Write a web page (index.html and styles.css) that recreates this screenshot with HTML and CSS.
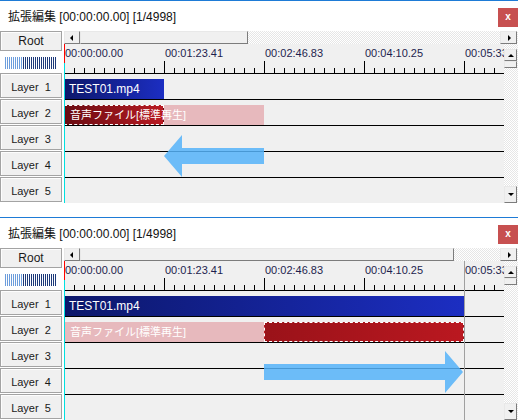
FILE: index.html
```html
<!DOCTYPE html>
<html lang="ja">
<head>
<meta charset="utf-8">
<title>拡張編集</title>
<link rel="stylesheet" href="styles.css">
</head>
<body>
<div class="screen">
  <div class="win">
    <div class="titlebar"><span class="title">拡張編集 [00:00:00.00] [1/4998]</span><span class="close">x</span></div>
    <div class="body">
      <div class="side">
        <div class="btn root">Root</div>
        <div class="grip"><span class="g1"></span><span class="g2"></span></div>
        <div class="btn layer">Layer&nbsp;&nbsp;1</div>
        <div class="btn layer">Layer&nbsp;&nbsp;2</div>
        <div class="btn layer">Layer&nbsp;&nbsp;3</div>
        <div class="btn layer">Layer&nbsp;&nbsp;4</div>
        <div class="btn layer">Layer&nbsp;&nbsp;5</div>
      </div>
      <div class="main">
        <div class="hscroll">
          <div class="sbtn"><span class="tri-l"></span></div>
          <div class="thumb" style="width:168px"></div>
          <div class="track"></div>
          <div class="sbtn rb"><span class="tri-r"></span></div>
        </div>
        <div class="content">
          <div class="tl">
            <div class="ruler">
              <span class="lbl">00:00:00.00</span><span class="lbl">00:01:23.41</span><span class="lbl">00:02:46.83</span><span class="lbl">00:04:10.25</span><span class="lbl">00:05:33.67</span>
            </div>
            <div class="row"><div class="clip blue" style="width:100px">TEST01.mp4</div></div>
            <div class="row"><div class="clip2 a"><div class="sel"></div><div class="txt">音声ファイル[標準再生]</div></div></div>
            <div class="row"></div>
            <div class="row"></div>
            <div class="row"></div>
            <div class="cursor"></div>
            <svg class="arrow" width="440" height="159" viewBox="0 0 440 159"><polygon points="100,112 118,91 118,104 200,104 200,120 118,120 118,133" fill="#55b3f9" fill-opacity="0.85"/></svg>
          </div>
          <div class="vscroll">
            <div class="vbtn up"><span class="tri-u"></span></div>
            <div class="vthumb"></div>
            <div class="vtrack"></div>
            <div class="vbtn down"><span class="tri-d"></span></div>
          </div>
        </div>
      </div>
    </div>
  </div>

  <div class="win">
    <div class="titlebar"><span class="title">拡張編集 [00:00:00.00] [1/4998]</span><span class="close">x</span></div>
    <div class="body">
      <div class="side">
        <div class="btn root">Root</div>
        <div class="grip"><span class="g1"></span><span class="g2"></span></div>
        <div class="btn layer">Layer&nbsp;&nbsp;1</div>
        <div class="btn layer">Layer&nbsp;&nbsp;2</div>
        <div class="btn layer">Layer&nbsp;&nbsp;3</div>
        <div class="btn layer">Layer&nbsp;&nbsp;4</div>
        <div class="btn layer">Layer&nbsp;&nbsp;5</div>
      </div>
      <div class="main">
        <div class="hscroll">
          <div class="sbtn"><span class="tri-l"></span></div>
          <div class="thumb" style="width:374px"></div>
          <div class="track"></div>
          <div class="sbtn rb"><span class="tri-r"></span></div>
        </div>
        <div class="content">
          <div class="tl">
            <div class="ruler">
              <span class="lbl">00:00:00.00</span><span class="lbl">00:01:23.41</span><span class="lbl">00:02:46.83</span><span class="lbl">00:04:10.25</span><span class="lbl">00:05:33.67</span>
            </div>
            <div class="row"><div class="clip blue" style="width:400px">TEST01.mp4</div></div>
            <div class="row"><div class="clip2 b"><div class="sel"></div><div class="txt">音声ファイル[標準再生]</div></div></div>
            <div class="row"></div>
            <div class="row"></div>
            <div class="row"></div>
            <div class="endline"></div>
            <div class="cursor"></div>
            <svg class="arrow" width="440" height="159" viewBox="0 0 440 159"><polygon points="200,103 381,103 381,90 399,111 381,132 381,119 200,119" fill="#55b3f9" fill-opacity="0.85"/></svg>
          </div>
          <div class="vscroll">
            <div class="vbtn up"><span class="tri-u"></span></div>
            <div class="vthumb"></div>
            <div class="vtrack"></div>
            <div class="vbtn down"><span class="tri-d"></span></div>
          </div>
        </div>
      </div>
    </div>
  </div>
</div>
</body>
</html>
```

FILE: styles.css
```css
* { box-sizing: border-box; margin: 0; padding: 0; }
html, body { background: #fff; }
body {
  width: 518px;
  height: 420px;
  overflow: hidden;
  font-family: "Liberation Sans", "Noto Sans CJK JP", sans-serif;
}
.screen { display: flex; flex-direction: column; gap: 14px; }
.win {
  height: 203px;
  display: flex;
  flex-direction: column;
  overflow: hidden;
  background: #fff;
}
.titlebar {
  height: 31px;
  flex: none;
  border-top: 1px solid #1e7bd6;
  display: flex;
  justify-content: space-between;
  align-items: flex-start;
}
.title {
  font-size: 12px;
  line-height: 14px;
  padding: 9px 0 0 8px;
  color: #111;
  white-space: nowrap;
}
.close {
  width: 20px;
  height: 19px;
  margin-top: 7px;
  background: #c75050;
  color: #fff;
  font: bold 10px/17px "Liberation Sans", sans-serif;
  text-align: center;
}
.body { flex: 1; display: flex; min-height: 0; }

/* left side */
.side { width: 64px; flex: none; display: flex; flex-direction: column; }
.btn {
  width: 62px;
  flex: none;
  background: #f0f0f0;
  border: 1px solid #a3a3a3;
  box-shadow: inset 1px 1px #fdfdfd;
  display: flex;
  align-items: center;
  justify-content: center;
  color: #1a1a1a;
  white-space: nowrap;
}
.root { height: 20px; font-size: 12px; }
.grip { height: 12px; width: 51px; margin: 6px 0 4px 5px; display: flex; flex: none; }
.g1 { width: 18px; background: repeating-linear-gradient(90deg, #6c9ddc 0 1px, #fff 1px 2px); }
.g2 { flex: 1; background: repeating-linear-gradient(90deg, #1d3a7a 0 1px, #fff 1px 2px); }
.layer { height: 25px; margin-bottom: 1px; font-size: 11px; padding-top: 3px; }

/* main */
.main { flex: 1; display: flex; flex-direction: column; min-width: 0; }
.hscroll, .vscroll, .track, .vtrack {
  background: repeating-conic-gradient(#ffffff 0 25%, #e6e6e6 0 50%) 0 0 / 2px 2px;
}
.hscroll { height: 13px; flex: none; display: flex; }
.sbtn, .thumb, .vbtn, .vthumb {
  background: #f0f0f0;
  border: 1px solid;
  border-color: #e8e8e8 #7c7c7c #7c7c7c #e8e8e8;
  flex: none;
}
.sbtn { width: 16px; height: 13px; display: flex; align-items: center; justify-content: center; }
.sbtn.rb { width: 17px; margin-right: 1px; }
.thumb { height: 13px; }
.track { flex: 1; }
.tri-l { width: 0; height: 0; border-top: 3px solid transparent; border-bottom: 3px solid transparent; border-right: 3px solid #000; margin-right: 2px; }
.tri-r { width: 0; height: 0; border-top: 3px solid transparent; border-bottom: 3px solid transparent; border-left: 3px solid #000; margin-left: 1px; }

.content { flex: 1; display: flex; min-height: 0; }
.tl {
  width: 440px;
  flex: none;
  position: relative;
  overflow: hidden;
  background: #f0f0f0;
}
.ruler {
  height: 30px;
  border-bottom: 1px solid #000;
  display: flex;
  overflow: hidden;
  white-space: nowrap;
  background:
    repeating-linear-gradient(90deg, #000 0 1px, transparent 1px 10px) left bottom / 100% 5px no-repeat,
    repeating-linear-gradient(90deg, #000 0 1px, transparent 1px 100px) left bottom / 100% 12px no-repeat,
    #f0f0f0;
}
.lbl {
  flex: 0 0 100px;
  font-size: 11px;
  line-height: 13px;
  padding: 3px 0 0 1px;
  color: #1e1e4e;
}
.row {
  height: 26px;
  border-bottom: 1px solid #000;
  padding-top: 5px;
  display: flex;
}
.clip {
  height: 20px;
  color: #fff;
  font-size: 12px;
  line-height: 20px;
  padding-left: 5px;
  white-space: nowrap;
  overflow: hidden;
}
.blue { background: linear-gradient(90deg, #0c176a, #1c2ec2); }
.clip2 {
  display: grid;
  height: 20px;
  grid-template-rows: 20px;
  background: #e7b9bd;
}
.clip2.a { grid-template-columns: 100px 100px; }
.clip2.b { grid-template-columns: 200px 200px; }
.sel { grid-row: 1; border: 1px dashed #fff; }
.a .sel { grid-column: 1; background: linear-gradient(90deg, #6a0c12, #b81a22); }
.b .sel { grid-column: 2; background: linear-gradient(90deg, #9a1219, #ba1820); }
.txt {
  grid-row: 1;
  grid-column: 1 / -1;
  color: #fff;
  font-size: 11px;
  line-height: 20px;
  padding-left: 6px;
  white-space: nowrap;
}
.cursor {
  position: absolute;
  left: 0; top: 0; bottom: 0;
  width: 1px;
  background: linear-gradient(#f00 0 19px, #00e0e0 19px);
}
.endline {
  position: absolute;
  left: 400px; top: 0; bottom: 0;
  width: 1px;
  background: #a0a0a0;
}
.arrow { position: absolute; left: 0; top: 0; }

/* vertical scrollbar */
.vscroll { flex: 1; display: flex; flex-direction: column; align-items: flex-end; padding: 5px 1px 0 0; }
.vbtn { width: 13px; display: flex; align-items: center; justify-content: center; }
.up { height: 12px; }
.down { height: 17px; }
.vthumb { width: 13px; height: 7px; }
.vtrack { flex: 1; width: 13px; }
.tri-u { width: 0; height: 0; border-left: 3px solid transparent; border-right: 3px solid transparent; border-bottom: 3px solid #000; }
.tri-d { width: 0; height: 0; border-left: 3px solid transparent; border-right: 3px solid transparent; border-top: 3px solid #000; }
```
